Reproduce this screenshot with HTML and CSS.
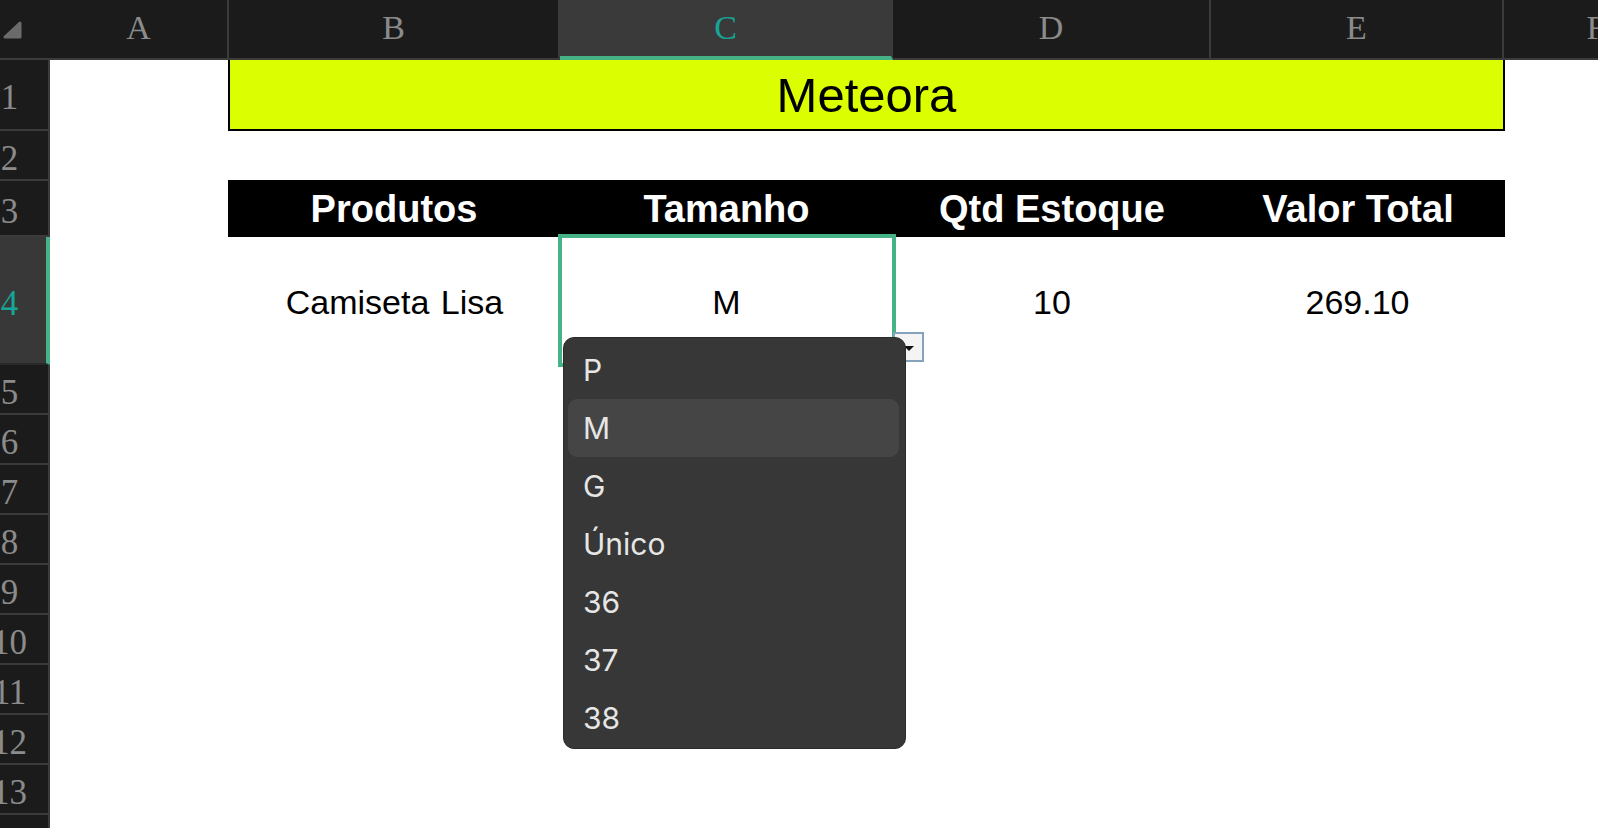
FILE: index.html
```html
<!DOCTYPE html>
<html lang="pt">
<head>
<meta charset="utf-8">
<title>Meteora</title>
<link rel="stylesheet" href="styles.css">
</head>
<body>
<div class="sheet">
  <div class="row colhead">
    <div class="corner">
      <svg width="26" height="44" viewBox="0 0 26 44"><path d="M20 23 L20 37 L5 37 Z" fill="#6b6b6b" stroke="#6b6b6b" stroke-width="3" stroke-linejoin="round"/></svg>
    </div>
    <div class="ch">A</div>
    <div class="ch">B</div>
    <div class="ch sel">C</div>
    <div class="ch">D</div>
    <div class="ch">E</div>
    <div class="ch">F</div>
  </div>

  <div class="row r1">
    <div class="rh"><span>1</span></div>
    <div class="cell"></div>
    <div class="title">Meteora</div>
    <div class="cell"></div>
  </div>

  <div class="row r2">
    <div class="rh"><span>2</span></div>
  </div>

  <div class="row r3">
    <div class="rh"><span>3</span></div>
    <div class="cell"></div>
    <div class="th first">Produtos</div>
    <div class="th">Tamanho</div>
    <div class="th">Qtd Estoque</div>
    <div class="th last">Valor Total</div>
  </div>

  <div class="row r4">
    <div class="rh sel"><span>4</span></div>
    <div class="cell"></div>
    <div class="td">Camiseta Lisa</div>
    <div class="td active">
      M
      <div class="selection"></div>
      <div class="dd-btn">
        <svg width="31" height="30" viewBox="0 0 31 30"><path d="M11 14 L21 14 L16 19 Z" fill="#111"/></svg>
      </div>
      <ul class="dropdown">
        <li>P</li>
        <li class="hl">M</li>
        <li>G</li>
        <li>Único</li>
        <li>36</li>
        <li>37</li>
        <li>38</li>
      </ul>
    </div>
    <div class="td">10</div>
    <div class="td">269.10</div>
  </div>

  <div class="row rn"><div class="rh"><span>5</span></div></div>
  <div class="row rn"><div class="rh"><span>6</span></div></div>
  <div class="row rn"><div class="rh"><span>7</span></div></div>
  <div class="row rn"><div class="rh"><span>8</span></div></div>
  <div class="row rn"><div class="rh"><span>9</span></div></div>
  <div class="row rn"><div class="rh"><span>10</span></div></div>
  <div class="row rn"><div class="rh"><span>11</span></div></div>
  <div class="row rn"><div class="rh"><span>12</span></div></div>
  <div class="row rn"><div class="rh"><span>13</span></div></div>
  <div class="row rn"><div class="rh"><span>14</span></div></div>
</div>
</body>
</html>
```

FILE: styles.css
```css
* { box-sizing: border-box; }

html, body {
  margin: 0;
  padding: 0;
}

body {
  width: 1598px;
  height: 828px;
  overflow: hidden;
  background: #ffffff;
  font-family: "Liberation Sans", Arial, sans-serif;
  color: #000;
}

.sheet {
  display: flex;
  flex-direction: column;
}

.row {
  display: grid;
  grid-template-columns: 50px 179px 331px 333px 318px 293px 186px;
}

/* column header */
.colhead {
  height: 60px;
  background: #1b1b1b;
}

.corner {
  border-bottom: 2px solid #3b3b3b;
}

.corner svg {
  display: block;
}

.ch {
  display: flex;
  align-items: center;
  justify-content: center;
  padding-bottom: 2px;
  border-right: 2px solid #3b3b3b;
  border-bottom: 2px solid #3b3b3b;
  font-family: "Liberation Serif", "Times New Roman", serif;
  font-size: 34px;
  color: #8b8b8b;
}

.ch.sel {
  background: #3a3a3a;
  color: #17a597;
  border-bottom: 4px solid #46b386;
  padding-bottom: 0;
}

/* row header */
.rh {
  display: flex;
  align-items: center;
  overflow: hidden;
  padding-top: 7px;
  background: #1b1b1b;
  border-right: 2px solid #3b3b3b;
  border-bottom: 2px solid #3b3b3b;
  font-family: "Liberation Serif", "Times New Roman", serif;
  font-size: 35px;
  color: #8b8b8b;
}

.rh span {
  width: 19px;
  flex: none;
  display: flex;
  justify-content: center;
  white-space: nowrap;
}

.rh.sel {
  background: #383838;
  color: #17a597;
  border-right: 4px solid #46b386;
  border-bottom-color: #2a2a2a;
}

.r1 { height: 71px; }
.r2 { height: 50px; }
.r3 { height: 56px; }
.r4 { height: 128px; }
.rn { height: 50px; }

/* title */
.title {
  grid-column: span 4;
  margin: 0 -1px 0 -1px;
  background: #dbff00;
  border: 2px solid #000;
  border-top: none;
  display: flex;
  align-items: center;
  justify-content: center;
  font-size: 49px;
  padding-top: 1px;
}

/* table header band */
.th {
  background: #000;
  color: #fff;
  font-weight: bold;
  font-size: 38px;
  display: flex;
  align-items: center;
  justify-content: center;
  margin-top: -1px;
  padding-top: 2px;
}

.th.first { margin-left: -1px; }
.th.last { margin-right: -1px; }

/* data row */
.td {
  display: flex;
  align-items: center;
  justify-content: center;
  font-size: 34px;
  padding-top: 2px;
  word-spacing: 2px;
}

.td.active {
  position: relative;
}

.selection {
  position: absolute;
  left: -2px;
  top: -3px;
  right: -3px;
  bottom: -2px;
  border: 4px solid #46b386;
}

.dd-btn {
  position: absolute;
  left: 333px;
  top: 95px;
  width: 31px;
  height: 30px;
  background: #f4f4f4;
  border: 2px solid #86a2bd;
}

.dd-btn svg {
  display: block;
  margin: -2px;
}

.dropdown {
  position: absolute;
  left: 3px;
  top: 100px;
  width: 343px;
  height: 412px;
  margin: 0;
  padding: 3px 0;
  list-style: none;
  background: #373737;
  border: 1px solid #2b2b2b;
  border-radius: 11px;
  font-family: Inter, "Noto Sans", sans-serif;
  font-size: 30px;
  color: #e6e6e6;
  z-index: 2;
}

.dropdown li {
  height: 58px;
  margin: 0 6px 0 4px;
  padding-left: 15px;
  border-radius: 9px;
  display: flex;
  align-items: center;
}

.dropdown li.hl {
  background: #454545;
}
```
